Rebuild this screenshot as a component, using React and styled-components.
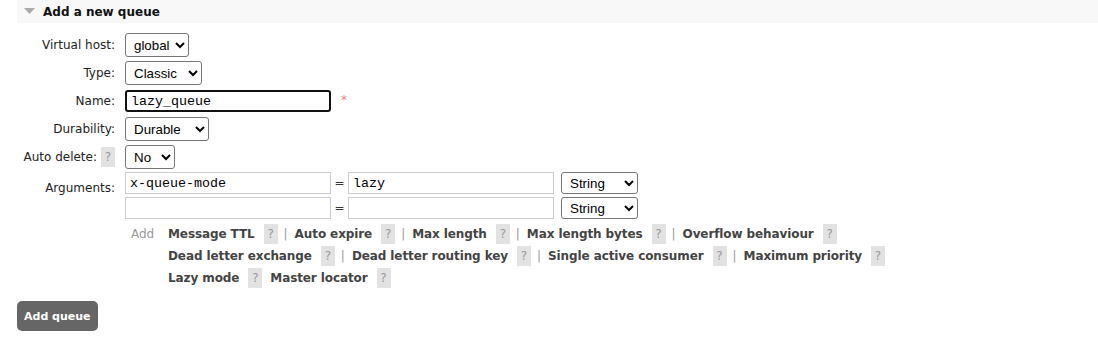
import React from "react";
import styled, { createGlobalStyle } from "styled-components";

const Global = createGlobalStyle`
  html, body { margin: 0; padding: 0; background: #fff; }
  body { font-family: Verdana, "DejaVu Sans", sans-serif; font-size: 12px; color: #222; }
`;

const Page = styled.div`
  padding-left: 17px;
`;

const SectionHeader = styled.div`
  display: flex;
  align-items: center;
  gap: 8px;
  height: 23px;
  padding-left: 7px;
  background: #f8f8f8;
`;

const Title = styled.h2`
  margin: 0;
  font-size: 12px;
  font-weight: bold;
  color: #111;
`;

const Form = styled.div`
  display: grid;
  grid-template-columns: 98px auto;
  column-gap: 10px;
  padding-top: 8px;
`;

const Label = styled.div`
  display: flex;
  justify-content: flex-end;
  align-items: ${(p) => (p.$top ? "flex-start" : "center")};
  gap: 4px;
  padding-top: ${(p) => (p.$top ? "10px" : "0")};
  box-sizing: border-box;
  height: ${(p) => p.$h || 28}px;
  white-space: nowrap;
`;

const Field = styled.div`
  display: flex;
  align-items: ${(p) => (p.$top ? "flex-start" : "center")};
  gap: 8px;
  min-height: ${(p) => p.$h || 28}px;
`;

const Select = styled.select`
  font-family: Arial, "Liberation Sans", sans-serif;
  font-size: 13.33px;
  height: 24px;
  padding: 0 2px 0 4px;
  border: 1px solid #767676;
  border-radius: 3px;
  background: #fff;
  color: #000;
  width: ${(p) => p.$w}px;
`;

const TextInput = styled.input`
  box-sizing: border-box;
  font-family: "Liberation Mono", "Courier New", monospace;
  font-size: 13.33px;
  width: 206px;
  height: 22px;
  padding: 0 4px;
  border: ${(p) => (p.$focused ? "2px solid #111" : "1px solid #ccc")};
  border-radius: ${(p) => (p.$focused ? "3px" : "0")};
  outline: none;
  color: #000;
`;

const Required = styled.span`
  color: #f08080;
  font-size: 12px;
  margin-left: 2px;
  align-self: flex-start;
  margin-top: 6px;
`;

const Help = styled.span`
  display: inline-flex;
  align-items: center;
  justify-content: center;
  width: 14px;
  height: 20px;
  background: #e2e2e2;
  color: #999;
  font-size: 12px;
`;

const ArgRows = styled.div`
  display: flex;
  flex-direction: column;
  gap: 3px;
  padding-top: 1px;
`;

const ArgRow = styled.div`
  display: flex;
  align-items: center;
`;

const Eq = styled.span`
  width: 17px;
  text-align: center;
  color: #333;
`;

const ArgSelect = styled(Select)`
  margin-left: 7px;
  height: 22px;
`;

const Links = styled.div`
  display: grid;
  grid-template-columns: 43px auto;
  padding-top: 2px;
`;

const AddLabel = styled.span`
  color: #999;
  padding-left: 6px;
  line-height: 22px;
`;

const LinkLines = styled.div`
  display: flex;
  flex-direction: column;
`;

const LinkLine = styled.div`
  display: flex;
  align-items: center;
  height: 22px;
  white-space: nowrap;
`;

const ArgLink = styled.span`
  font-weight: bold;
  color: #444;
  letter-spacing: -0.1px;
  margin-right: 9px;
  cursor: pointer;
`;

const Sep = styled.span`
  color: #999;
  margin: 0 7px 0 6px;
`;

const Spacer = styled.span`
  width: 8px;
`;

const Button = styled.button`
  margin-top: 12px;
  background: #666;
  color: #fff;
  border: none;
  border-radius: 5px;
  font-family: Verdana, "DejaVu Sans", sans-serif;
  font-size: 11px;
  font-weight: bold;
  height: 30px;
  padding: 0 7px;
`;

const Caret = () => (
  <svg width="11" height="7" viewBox="0 0 11 7">
    <path d="M0 0 L11 0 L5.5 6 Z" fill="#aaa" />
  </svg>
);

const linkRows = [
  ["Message TTL", "Auto expire", "Max length", "Max length bytes", "Overflow behaviour"],
  ["Dead letter exchange", "Dead letter routing key", "Single active consumer", "Maximum priority"],
  ["Lazy mode", "Master locator"],
];

export default function App() {
  return (
    <Page>
      <Global />
      <SectionHeader>
        <Caret />
        <Title>Add a new queue</Title>
      </SectionHeader>
      <Form>
        <Label>Virtual host:</Label>
        <Field>
          <Select $w={64} defaultValue="global"><option>global</option></Select>
        </Field>
        <Label>Type:</Label>
        <Field>
          <Select $w={77} defaultValue="Classic"><option>Classic</option><option>Quorum</option></Select>
        </Field>
        <Label>Name:</Label>
        <Field>
          <TextInput $focused defaultValue="lazy_queue" />
          <Required>*</Required>
        </Field>
        <Label>Durability:</Label>
        <Field>
          <Select $w={84} defaultValue="Durable"><option>Durable</option><option>Transient</option></Select>
        </Field>
        <Label>Auto delete: <Help>?</Help></Label>
        <Field>
          <Select $w={50} defaultValue="No"><option>No</option><option>Yes</option></Select>
        </Field>
        <Label $top $h={50}>Arguments:</Label>
        <Field $top>
          <ArgRows>
            <ArgRow>
              <TextInput defaultValue="x-queue-mode" />
              <Eq>=</Eq>
              <TextInput defaultValue="lazy" />
              <ArgSelect $w={77} defaultValue="String"><option>String</option><option>Number</option></ArgSelect>
            </ArgRow>
            <ArgRow>
              <TextInput defaultValue="" />
              <Eq>=</Eq>
              <TextInput defaultValue="" />
              <ArgSelect $w={77} defaultValue="String"><option>String</option><option>Number</option></ArgSelect>
            </ArgRow>
          </ArgRows>
        </Field>
        <div />
        <Links>
          <AddLabel>Add</AddLabel>
          <LinkLines>
            {linkRows.map((row, ri) => (
              <LinkLine key={ri}>
                {row.map((name, i) => (
                  <React.Fragment key={name}>
                    <ArgLink>{name}</ArgLink>
                    <Help>?</Help>
                    {ri < 2 && i < row.length - 1 && <Sep>|</Sep>}
                    {ri === 2 && i < row.length - 1 && <Spacer />}
                  </React.Fragment>
                ))}
              </LinkLine>
            ))}
          </LinkLines>
        </Links>
      </Form>
      <Button>Add queue</Button>
    </Page>
  );
}
